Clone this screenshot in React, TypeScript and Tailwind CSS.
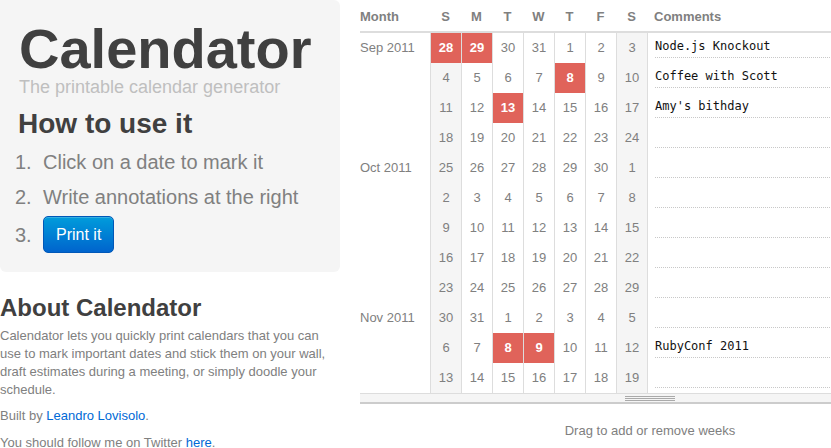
import React from "react";

type Week = { month?: string; days: number[]; marked: number[]; note?: string };

const weeks: Week[] = [
  { month: "Sep 2011", days: [28, 29, 30, 31, 1, 2, 3], marked: [0, 1], note: "Node.js Knockout" },
  { days: [4, 5, 6, 7, 8, 9, 10], marked: [4], note: "Coffee with Scott" },
  { days: [11, 12, 13, 14, 15, 16, 17], marked: [2], note: "Amy's bithday" },
  { days: [18, 19, 20, 21, 22, 23, 24], marked: [] },
  { month: "Oct 2011", days: [25, 26, 27, 28, 29, 30, 1], marked: [] },
  { days: [2, 3, 4, 5, 6, 7, 8], marked: [] },
  { days: [9, 10, 11, 12, 13, 14, 15], marked: [] },
  { days: [16, 17, 18, 19, 20, 21, 22], marked: [] },
  { days: [23, 24, 25, 26, 27, 28, 29], marked: [] },
  { month: "Nov 2011", days: [30, 31, 1, 2, 3, 4, 5], marked: [] },
  { days: [6, 7, 8, 9, 10, 11, 12], marked: [2, 3], note: "RubyConf 2011" },
  { days: [13, 14, 15, 16, 17, 18, 19], marked: [] },
];

const dayNames = ["S", "M", "T", "W", "T", "F", "S"];

function DayCell({ day, col, marked }: { day: number; col: number; marked: boolean }) {
  const weekend = col === 0 || col === 6;
  let cls = "border-l border-[#dddddd] text-center leading-[30px] h-[30px] cursor-pointer ";
  if (marked) cls += "bg-[#e0635a] text-white font-bold";
  else if (weekend) cls += "bg-[#f5f5f5] text-[#808080]";
  else cls += "bg-white text-[#808080]";
  return <div className={cls}>{day}</div>;
}

export default function App() {
  return (
    <div
      className="w-[831px] h-[448px] overflow-hidden flex gap-[20px] bg-white text-[13px] text-[#808080]"
      style={{ fontFamily: '"Liberation Sans", Arial, sans-serif' }}
    >
      {/* left column */}
      <div className="w-[340px] shrink-0">
        <div className="bg-[#f5f5f5] rounded-b-[6px] rounded-tr-[6px] pt-[21px] pl-[19px] pb-[18px]">
          <h1 className="text-[56px] leading-[56px] font-bold text-[#404040]">Calendator</h1>
          <p className="text-[18px] leading-[18px] text-[#bfbfbf] mt-[1px]">The printable calendar generator</p>
          <h2 className="text-[28px] leading-[28px] font-bold text-[#404040] mt-[14px] -ml-[1px]">How to use it</h2>
          <ol className="mt-[7px] -ml-[4px] text-[20px] text-[#808080]">
            <li className="flex leading-[35px]">
              <span className="w-[28px]">1.</span>
              <span>Click on a date to mark it</span>
            </li>
            <li className="flex leading-[35px]">
              <span className="w-[28px]">2.</span>
              <span>Write annotations at the right</span>
            </li>
            <li className="flex items-center h-[39px]">
              <span className="w-[28px]">3.</span>
              <button className="h-[37px] px-[12px] rounded-[5px] border border-[#0058b8] bg-gradient-to-b from-[#049cdb] to-[#0064cd] text-white text-[16px] leading-[20px] shadow-[inset_0_1px_0_rgba(255,255,255,0.2)]">
                Print it
              </button>
            </li>
          </ol>
        </div>

        <h2 className="mt-[21px] text-[24px] leading-[30px] font-bold text-[#404040]">About Calendator</h2>
        <p className="mt-[4px] leading-[18px]">
          Calendator lets you quickly print calendars that you can use to mark important dates and stick them on your wall,
          draft estimates during a meeting, or simply doodle your schedule.
        </p>
        <p className="mt-[8px] leading-[18px]">
          Built by <a className="text-[#0069d6]" href="#">Leandro Lovisolo</a>.
        </p>
        <p className="mt-[9px] leading-[18px]">
          You should follow me on Twitter <a className="text-[#0069d6]" href="#">here</a>.
        </p>
      </div>

      {/* right column */}
      <div className="w-[580px] shrink-0">
        <div className="grid grid-cols-[70px_repeat(7,31px)_1fr]">
          <div className="h-[31px] pt-[2px] leading-[29px] font-bold text-[#808080]">Month</div>
          {dayNames.map((d, i) => (
            <div key={i} className="h-[31px] pt-[2px] leading-[29px] font-bold text-center text-[#808080]">
              {d}
            </div>
          ))}
          <div className="h-[31px] pt-[2px] leading-[29px] font-bold text-[#808080] pl-[7px]">Comments</div>
          <div className="col-span-9 h-[2px] bg-[#dddddd]" />
          {weeks.map((w, r) => (
            <React.Fragment key={r}>
              <div className="h-[30px] leading-[30px] text-[#808080]">{w.month ?? ""}</div>
              {w.days.map((d, c) => (
                <DayCell key={c} day={d} col={c} marked={w.marked.includes(c)} />
              ))}
              <div className="h-[30px] border-l border-[#dddddd] pl-[7px]">
                <div
                  className="h-[25px] pt-[5px] leading-[16px] border-b border-dotted border-[#c8c8c8] text-[12px] text-[#111111]"
                  style={{ fontFamily: '"DejaVu Sans Mono", monospace' }}
                >
                  {w.note ?? ""}
                </div>
              </div>
            </React.Fragment>
          ))}
        </div>
        <div className="h-[11px] border-t border-[#dddddd] border-b-2 border-b-[#cccccc] bg-[#f5f5f5] flex justify-center items-center">
          <div className="w-[50px] flex flex-col gap-[1px]">
            <div className="h-[1px] bg-[#aaaaaa]" />
            <div className="h-[1px] bg-[#aaaaaa]" />
            <div className="h-[1px] bg-[#aaaaaa]" />
          </div>
        </div>
        <p className="mt-[18px] leading-[18px] text-center text-[#808080]">Drag to add or remove weeks</p>
      </div>
    </div>
  );
}
